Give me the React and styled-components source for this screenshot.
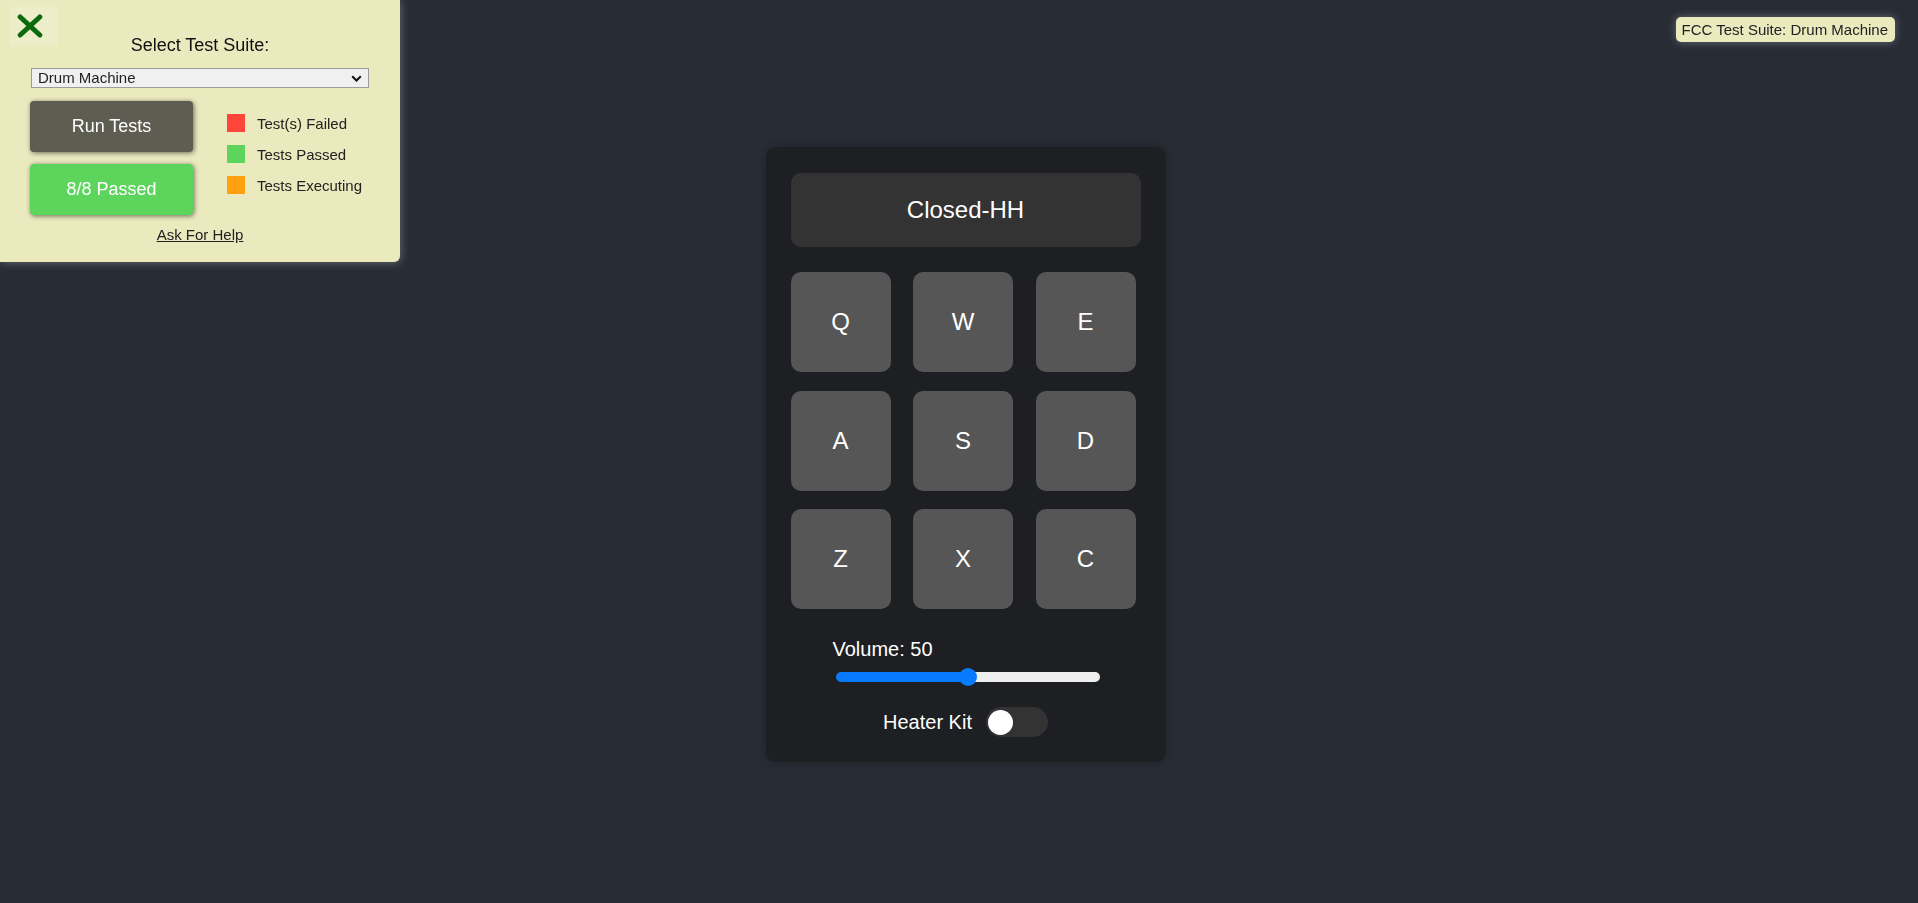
import React, { useState } from "react";
import styled, { createGlobalStyle } from "styled-components";

const GlobalStyle = createGlobalStyle`
  html, body {
    margin: 0;
    padding: 0;
    background: #282c34;
    font-family: "Liberation Sans", Arial, sans-serif;
  }
  * { box-sizing: border-box; }
`;

const Page = styled.div`
  min-height: 100vh;
  display: flex;
  align-items: center;
  justify-content: center;
  padding: 6px 0 0 13px;
`;

/* ---------- FCC test panel ---------- */

const TestPanel = styled.div`
  position: fixed;
  top: 0;
  left: 0;
  width: 400px;
  height: 262px;
  padding: 35px 30px 0;
  background: #ebe9be;
  border-bottom-right-radius: 6px;
  box-shadow: 1px 1px 8px rgba(255, 255, 255, 0.28);
  color: #111;
  z-index: 5;
`;

const CloseBox = styled.div`
  position: absolute;
  top: 7px;
  left: 10px;
  width: 48px;
  height: 38px;
  padding-left: 7px;
  display: flex;
  align-items: center;
  background: rgba(255, 255, 255, 0.18);
  cursor: pointer;
`;

const Title = styled.div`
  text-align: center;
  font-size: 18px;
  line-height: 20px;
`;

const SelectWrap = styled.div`
  position: relative;
  margin: 13px 1px 0;
  height: 20px;
`;

const SuiteSelect = styled.select`
  -webkit-appearance: none;
  appearance: none;
  width: 100%;
  height: 20px;
  padding: 0 0 0 6px;
  border: 1px solid #9c9c9c;
  border-radius: 0;
  background: #f0f0f0;
  font-family: "Liberation Sans", Arial, sans-serif;
  font-size: 15px;
  line-height: 18px;
  color: #222;
`;

const Chevron = styled.svg`
  position: absolute;
  right: 7px;
  top: 7px;
  pointer-events: none;
`;

const Controls = styled.div`
  display: flex;
  gap: 34px;
  margin-top: 13px;
`;

const ButtonCol = styled.div`
  display: flex;
  flex-direction: column;
  gap: 12px;
`;

const PanelButton = styled.div`
  width: 163px;
  height: 51px;
  display: flex;
  align-items: center;
  justify-content: center;
  border-radius: 4px;
  background: ${({ $bg }) => $bg};
  color: #fff;
  font-size: 18px;
  box-shadow: 1px 1px 5px rgba(0, 0, 0, 0.55);
  cursor: pointer;
`;

const Legend = styled.div`
  display: flex;
  flex-direction: column;
  gap: 13px;
  margin-top: 13px;
`;

const LegendRow = styled.div`
  display: flex;
  align-items: center;
  gap: 12px;
  height: 18px;
  font-size: 15px;
  color: #222;
`;

const Swatch = styled.span`
  width: 18px;
  height: 18px;
  background: ${({ $color }) => $color};
`;

const HelpLink = styled.a`
  display: block;
  margin-top: 11px;
  text-align: center;
  font-size: 15px;
  line-height: 17px;
  color: #222;
  text-decoration: underline;
`;

const Badge = styled.div`
  position: fixed;
  top: 17px;
  right: 23px;
  height: 25px;
  padding: 0 7px 0 6px;
  display: flex;
  align-items: center;
  background: #ebe9be;
  border-radius: 5px;
  font-size: 15px;
  color: #222;
  box-shadow: 0 0 8px rgba(255, 255, 255, 0.3);
`;

/* ---------- drum machine ---------- */

const Machine = styled.div`
  width: 400px;
  padding: 26px 25px 25px;
  background: #1e1f22;
  border-radius: 10px;
  box-shadow: 0 0 10px rgba(0, 0, 0, 0.25);
  color: #fff;
`;

const Display = styled.div`
  height: 74px;
  display: flex;
  align-items: center;
  justify-content: center;
  background: #333;
  border-radius: 10px;
  font-size: 24px;
`;

const PadGrid = styled.div`
  display: grid;
  grid-template-columns: repeat(3, 100px);
  column-gap: 22.5px;
  row-gap: 18.5px;
  margin-top: 25px;
`;

const Pad = styled.div`
  height: 100px;
  display: flex;
  align-items: center;
  justify-content: center;
  background: #565656;
  border-radius: 10px;
  font-size: 24px;
  cursor: pointer;
`;

const VolumeBlock = styled.div`
  width: 266px;
  margin: 29px auto 0;
  display: flex;
  flex-direction: column;
`;

const VolumeLabel = styled.div`
  font-size: 20px;
  line-height: 23px;
`;

const Range = styled.input`
  -webkit-appearance: none;
  appearance: none;
  display: block;
  width: 264px;
  height: 10px;
  margin: 11px 0 0 3px;
  border-radius: 5px;
  border: none;
  outline: none;
  &::-webkit-slider-thumb {
    -webkit-appearance: none;
    appearance: none;
    width: 18px;
    height: 18px;
    border-radius: 50%;
    background: #087bfd;
    border: none;
    cursor: pointer;
  }
`;

const HeaterRow = styled.div`
  display: flex;
  align-items: center;
  justify-content: center;
  gap: 14px;
  margin-top: 25px;
  font-size: 20px;
`;

const Toggle = styled.div`
  width: 62px;
  height: 30px;
  padding: 2px;
  border-radius: 15px;
  background: #333;
  display: flex;
  align-items: center;
  justify-content: ${({ $on }) => ($on ? "flex-end" : "flex-start")};
  cursor: pointer;
`;

const Knob = styled.span`
  width: 25px;
  height: 25px;
  border-radius: 50%;
  background: #fff;
`;

const pads = ["Q", "W", "E", "A", "S", "D", "Z", "X", "C"];

export default function App() {
  const [volume, setVolume] = useState(50);
  const [heater, setHeater] = useState(false);
  const pct = volume;

  return (
    <>
      <GlobalStyle />
      <TestPanel>
        <CloseBox>
          <svg width="26" height="24" viewBox="0 0 26 24">
            <path d="M3.2 3 L22.8 21 M22.8 3 L3.2 21" stroke="#0b6a0b" strokeWidth="5" strokeLinecap="round" />
          </svg>
        </CloseBox>
        <Title>Select Test Suite:</Title>
        <SelectWrap>
          <SuiteSelect defaultValue="drum">
            <option value="drum">Drum Machine</option>
          </SuiteSelect>
          <Chevron width="11" height="7" viewBox="0 0 11 7">
            <path d="M1.2 1.2 L5.5 5.5 L9.8 1.2" fill="none" stroke="#111" strokeWidth="2" />
          </Chevron>
        </SelectWrap>
        <Controls>
          <ButtonCol>
            <PanelButton $bg="#5e5d51">Run Tests</PanelButton>
            <PanelButton $bg="#5dd55d">8/8 Passed</PanelButton>
          </ButtonCol>
          <Legend>
            <LegendRow><Swatch $color="#fd4639" />Test(s) Failed</LegendRow>
            <LegendRow><Swatch $color="#5dd55d" />Tests Passed</LegendRow>
            <LegendRow><Swatch $color="#ffa011" />Tests Executing</LegendRow>
          </Legend>
        </Controls>
        <HelpLink href="#">Ask For Help</HelpLink>
      </TestPanel>

      <Badge>FCC Test Suite: Drum Machine</Badge>

      <Page>
        <Machine id="drum-machine">
          <Display id="display">Closed-HH</Display>
          <PadGrid>
            {pads.map((k) => (
              <Pad key={k} className="drum-pad">{k}</Pad>
            ))}
          </PadGrid>
          <VolumeBlock>
            <VolumeLabel>Volume: {volume}</VolumeLabel>
            <Range
              type="range"
              min="0"
              max="100"
              value={volume}
              onChange={(e) => setVolume(Number(e.target.value))}
              style={{
                background: `linear-gradient(to right, #087bfd 0%, #087bfd ${pct}%, #efefef ${pct}%, #efefef 100%)`,
              }}
            />
          </VolumeBlock>
          <HeaterRow>
            Heater Kit
            <Toggle $on={heater} onClick={() => setHeater(!heater)}>
              <Knob />
            </Toggle>
          </HeaterRow>
        </Machine>
      </Page>
    </>
  );
}
